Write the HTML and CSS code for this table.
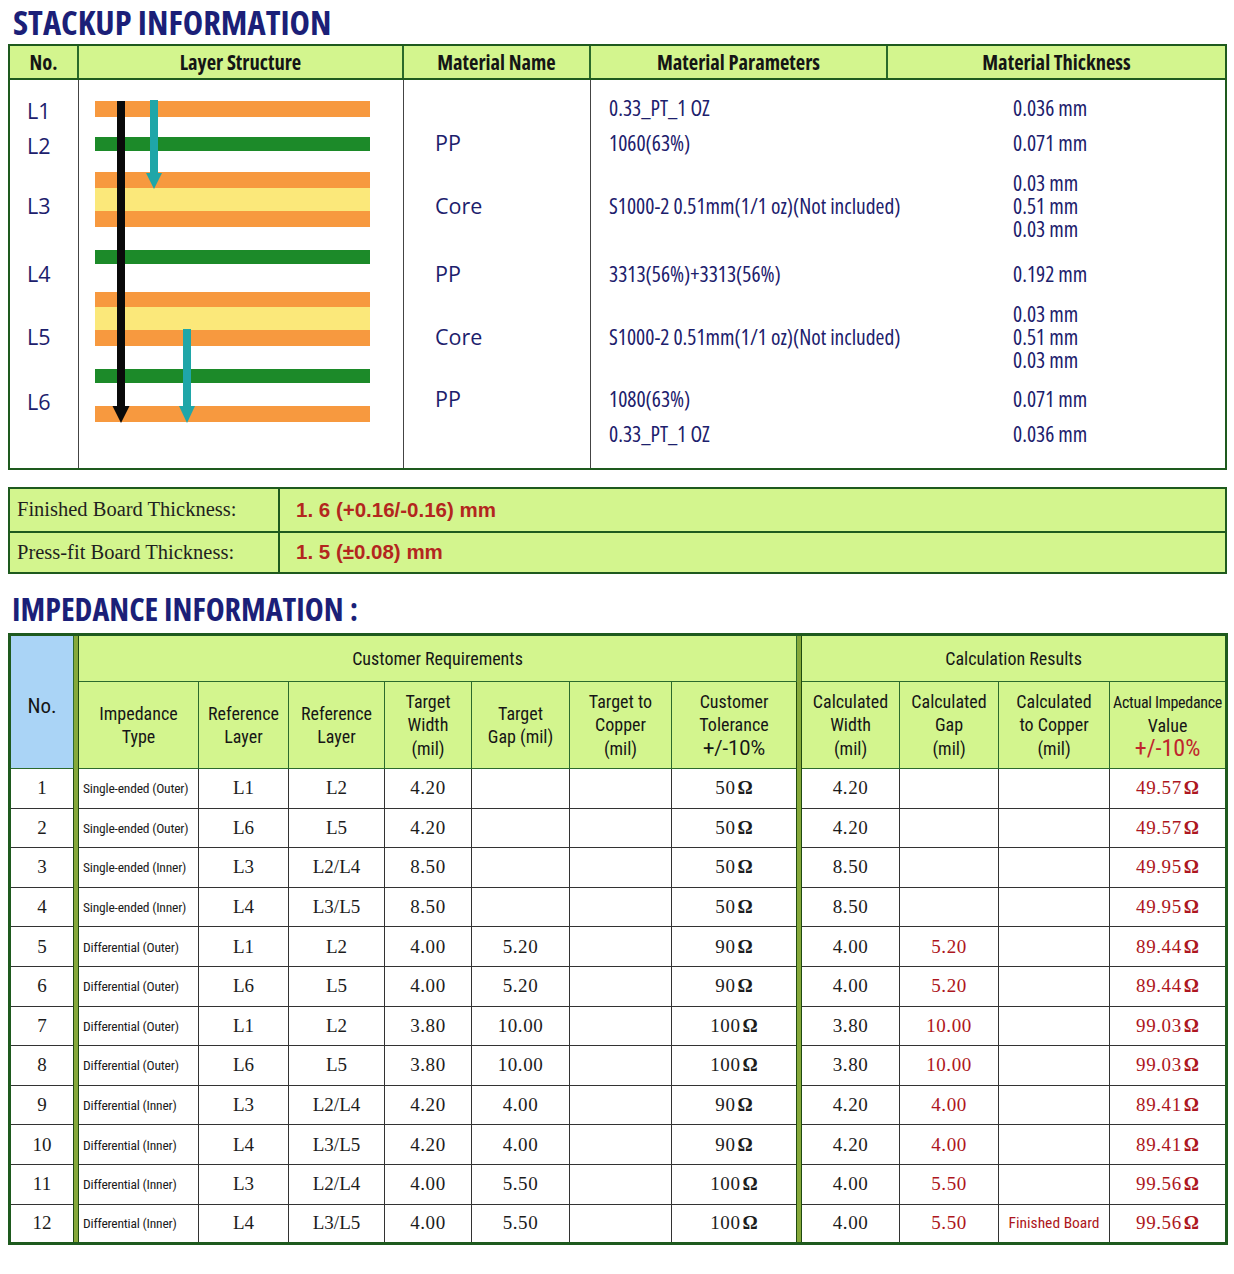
FILE: index.html
```html
<!DOCTYPE html>
<html>
<head>
<meta charset="utf-8">
<title>Stackup &amp; Impedance Information</title>
<link rel="stylesheet" href="styles.css">
</head>
<body>
<h1 class="title t1">STACKUP INFORMATION</h1>
<div class="stk">
  <div class="stk-head">
    <div class="sh">No.</div>
    <div class="sh">Layer Structure</div>
    <div class="sh">Material Name</div>
    <div class="sh">Material Parameters</div>
    <div class="sh last">Material Thickness</div>
  </div>
  <div class="stk-body">
    <div class="scol c1">
      <span class="r1 nudge">L1</span>
      <span class="r2 nudge">L2</span>
      <span class="r4">L3</span>
      <span class="r6">L4</span>
      <span class="r8">L5</span>
      <span class="r10 nudge">L6</span>
    </div>
    <div class="scol c2">
      <svg class="layers" width="323" height="388" viewBox="0 0 323 388">
        <rect x="16" y="21" width="275" height="16" fill="#f7993f"/>
        <rect x="16" y="57" width="275" height="14" fill="#1c8a29"/>
        <rect x="16" y="92" width="275" height="16" fill="#f7993f"/>
        <rect x="16" y="108" width="275" height="23" fill="#fbe87a"/>
        <rect x="16" y="131" width="275" height="16" fill="#f7993f"/>
        <rect x="16" y="170" width="275" height="14" fill="#1c8a29"/>
        <rect x="16" y="212" width="275" height="15" fill="#f7993f"/>
        <rect x="16" y="227" width="275" height="23" fill="#fbe87a"/>
        <rect x="16" y="250" width="275" height="16" fill="#f7993f"/>
        <rect x="16" y="289" width="275" height="14" fill="#1c8a29"/>
        <rect x="16" y="326" width="275" height="16" fill="#f7993f"/>
        <rect x="38" y="21" width="8" height="307" fill="#0a0a0a"/>
        <polygon points="33.5,326 50.5,326 42,343" fill="#0a0a0a"/>
        <rect x="71" y="20" width="8" height="75" fill="#1fa6a8"/>
        <polygon points="67,93 83,93 75,109" fill="#1fa6a8"/>
        <rect x="104" y="249" width="8" height="79" fill="#1fa6a8"/>
        <polygon points="100,326 116,326 108,343" fill="#1fa6a8"/>
      </svg>
    </div>
    <div class="scol c3">
      <span class="r2">PP</span>
      <span class="r4">Core</span>
      <span class="r6">PP</span>
      <span class="r8">Core</span>
      <span class="r10">PP</span>
    </div>
    <div class="scol c4">
      <span class="r1">0.33_PT_1 OZ</span>
      <span class="r2">1060(63%)</span>
      <span class="r4">S1000-2 0.51mm(1/1 oz)(Not included)</span>
      <span class="r6">3313(56%)+3313(56%)</span>
      <span class="r8">S1000-2 0.51mm(1/1 oz)(Not included)</span>
      <span class="r10">1080(63%)</span>
      <span class="r11">0.33_PT_1 OZ</span>
    </div>
    <div class="scol c5">
      <span class="r1">0.036 mm</span>
      <span class="r2">0.071 mm</span>
      <span class="r3">0.03 mm</span>
      <span class="r4">0.51 mm</span>
      <span class="r5">0.03 mm</span>
      <span class="r6">0.192 mm</span>
      <span class="r7">0.03 mm</span>
      <span class="r8">0.51 mm</span>
      <span class="r9">0.03 mm</span>
      <span class="r10">0.071 mm</span>
      <span class="r11">0.036 mm</span>
    </div>
  </div>
</div>

<div class="brd">
  <div class="bl">Finished Board Thickness:</div>
  <div class="bv">1. 6 (+0.16/-0.16) mm</div>
  <div class="bl bot">Press-fit Board Thickness:</div>
  <div class="bv bot">1. 5 (±0.08) mm</div>
</div>

<h2 class="title t2">IMPEDANCE INFORMATION<span class="colon">:</span></h2>

<table class="imp">
  <colgroup>
    <col style="width:64px"><col style="width:5px"><col style="width:120px"><col style="width:90px">
    <col style="width:96px"><col style="width:87px"><col style="width:98px"><col style="width:102px">
    <col style="width:125px"><col style="width:5px"><col style="width:98px"><col style="width:99px">
    <col style="width:111px"><col style="width:117px">
  </colgroup>
  <tr class="grp">
    <td class="hd no" rowspan="2">No.</td>
    <td class="dbl" rowspan="14"></td>
    <td class="hd" colspan="7">Customer Requirements</td>
    <td class="dbl" rowspan="14"></td>
    <td class="hd" colspan="4">Calculation Results</td>
  </tr>
  <tr class="sub">
    <td class="hd">Impedance<br>Type</td>
    <td class="hd">Reference<br>Layer</td>
    <td class="hd">Reference<br>Layer</td>
    <td class="hd">Target<br>Width<br>(mil)</td>
    <td class="hd">Target<br>Gap (mil)</td>
    <td class="hd">Target to<br>Copper<br>(mil)</td>
    <td class="hd">Customer<br>Tolerance<br><span class="tol">+/-10%</span></td>
    <td class="hd">Calculated<br>Width<br>(mil)</td>
    <td class="hd">Calculated<br>Gap<br>(mil)</td>
    <td class="hd">Calculated<br>to Copper<br>(mil)</td>
    <td class="hd act"><span class="small">Actual Impedance</span><br>Value<br><span class="pct">+/-10%</span></td>
  </tr>
  <tr><td>1</td><td class="ty">Single-ended (Outer)</td><td>L1</td><td>L2</td><td class="n">4.20</td><td></td><td></td><td class="n">50<b>Ω</b></td><td class="n">4.20</td><td></td><td></td><td class="n red">49.57<b>Ω</b></td></tr>
  <tr><td>2</td><td class="ty">Single-ended (Outer)</td><td>L6</td><td>L5</td><td class="n">4.20</td><td></td><td></td><td class="n">50<b>Ω</b></td><td class="n">4.20</td><td></td><td></td><td class="n red">49.57<b>Ω</b></td></tr>
  <tr><td>3</td><td class="ty">Single-ended (Inner)</td><td>L3</td><td>L2/L4</td><td class="n">8.50</td><td></td><td></td><td class="n">50<b>Ω</b></td><td class="n">8.50</td><td></td><td></td><td class="n red">49.95<b>Ω</b></td></tr>
  <tr><td>4</td><td class="ty">Single-ended (Inner)</td><td>L4</td><td>L3/L5</td><td class="n">8.50</td><td></td><td></td><td class="n">50<b>Ω</b></td><td class="n">8.50</td><td></td><td></td><td class="n red">49.95<b>Ω</b></td></tr>
  <tr><td>5</td><td class="ty">Differential (Outer)</td><td>L1</td><td>L2</td><td class="n">4.00</td><td class="n">5.20</td><td></td><td class="n">90<b>Ω</b></td><td class="n">4.00</td><td class="n red">5.20</td><td></td><td class="n red">89.44<b>Ω</b></td></tr>
  <tr><td>6</td><td class="ty">Differential (Outer)</td><td>L6</td><td>L5</td><td class="n">4.00</td><td class="n">5.20</td><td></td><td class="n">90<b>Ω</b></td><td class="n">4.00</td><td class="n red">5.20</td><td></td><td class="n red">89.44<b>Ω</b></td></tr>
  <tr><td>7</td><td class="ty">Differential (Outer)</td><td>L1</td><td>L2</td><td class="n">3.80</td><td class="n">10.00</td><td></td><td class="n">100<b>Ω</b></td><td class="n">3.80</td><td class="n red">10.00</td><td></td><td class="n red">99.03<b>Ω</b></td></tr>
  <tr><td>8</td><td class="ty">Differential (Outer)</td><td>L6</td><td>L5</td><td class="n">3.80</td><td class="n">10.00</td><td></td><td class="n">100<b>Ω</b></td><td class="n">3.80</td><td class="n red">10.00</td><td></td><td class="n red">99.03<b>Ω</b></td></tr>
  <tr><td>9</td><td class="ty">Differential (Inner)</td><td>L3</td><td>L2/L4</td><td class="n">4.20</td><td class="n">4.00</td><td></td><td class="n">90<b>Ω</b></td><td class="n">4.20</td><td class="n red">4.00</td><td></td><td class="n red">89.41<b>Ω</b></td></tr>
  <tr><td>10</td><td class="ty">Differential (Inner)</td><td>L4</td><td>L3/L5</td><td class="n">4.20</td><td class="n">4.00</td><td></td><td class="n">90<b>Ω</b></td><td class="n">4.20</td><td class="n red">4.00</td><td></td><td class="n red">89.41<b>Ω</b></td></tr>
  <tr><td>11</td><td class="ty">Differential (Inner)</td><td>L3</td><td>L2/L4</td><td class="n">4.00</td><td class="n">5.50</td><td></td><td class="n">100<b>Ω</b></td><td class="n">4.00</td><td class="n red">5.50</td><td></td><td class="n red">99.56<b>Ω</b></td></tr>
  <tr><td>12</td><td class="ty">Differential (Inner)</td><td>L4</td><td>L3/L5</td><td class="n">4.00</td><td class="n">5.50</td><td></td><td class="n">100<b>Ω</b></td><td class="n">4.00</td><td class="n red">5.50</td><td class="fb">Finished Board</td><td class="n red">99.56<b>Ω</b></td></tr>
</table>
</body>
</html>
```
FILE: styles.css
```css
* { box-sizing: border-box; }
body {
  margin: 0;
  width: 1234px;
  background: #ffffff;
  font-family: "Open Sans", "DejaVu Sans Condensed", sans-serif;
  font-stretch: 75%;
  color: #1a1a1a;
}
.title {
  margin: 0;
  height: 44px;
  line-height: 44px;
  padding-left: 13px;
  font-size: 32px;
  font-weight: bold;
  font-stretch: 75%;
  color: #1b1f78;
  white-space: nowrap;
}
.t1 { font-size: 34.5px; }
.t2 {
  margin-top: 10px;
  height: 49px;
  line-height: 49px;
  padding-left: 12px;
}
.colon { margin-left: 6px; }

/* ---------- stackup ---------- */
.stk {
  margin-left: 8px;
  width: 1219px;
  border: 2px solid #1e5a1e;
}
.stk-head {
  display: grid;
  grid-template-columns: 69px 325px 187px 297px 337px;
  height: 34px;
  background: #d3f58e;
  border-bottom: 2px solid #1e5a1e;
}
.sh {
  display: flex;
  align-items: center;
  justify-content: center;
  font-weight: bold;
  font-size: 20.5px;
  color: #151515;
  border-right: 2px solid #2a6a2a;
}
.sh.last { border-right: 0; }
.stk-body {
  display: flex;
  height: 388px;
}
.scol {
  display: grid;
  grid-template-rows: 15.5px 23px 12px 23px 17px 23px 23px 23px 22px 23px 17px 23px 23px 23px 16px 23px 12px 23px 1fr;
  color: #1c206c;
  font-size: 21.5px;
  flex: none;
}
.scol > span {
  display: flex;
  align-items: center;
  white-space: nowrap;
  line-height: 23px;
}
.c1 { width: 69px; padding-left: 17px; border-right: 1.5px solid #444; font-stretch: 90%; }
.c2 { width: 325px; border-right: 1.5px solid #444; display: block; }
.c3 { width: 187px; padding-left: 31px; border-right: 1.5px solid #444; font-stretch: 90%; }
.c4 { width: 297px; padding-left: 18px; }
.c5 { width: 337px; padding-left: 125px; }
.nudge { padding-top: 7px; }
.r1 { grid-row: 2; }
.r2 { grid-row: 4; }
.r3 { grid-row: 6; }
.r4 { grid-row: 7; }
.r5 { grid-row: 8; }
.r6 { grid-row: 10; }
.r7 { grid-row: 12; }
.r8 { grid-row: 13; }
.r9 { grid-row: 14; }
.r10 { grid-row: 16; }
.r11 { grid-row: 18; }
.layers { display: block; }

/* ---------- board thickness ---------- */
.brd {
  margin: 17px 0 0 8px;
  width: 1219px;
  display: grid;
  grid-template-columns: 270px 1fr;
  grid-template-rows: 41.5px 41.5px;
  background: #d3f58e;
  border: 2.5px solid #1e5a1e;
}
.bl {
  display: flex;
  align-items: center;
  padding-left: 7px;
  font-family: "Liberation Serif", "DejaVu Serif", serif;
  font-stretch: normal;
  font-size: 20.5px;
  color: #1f1f1f;
  border-right: 2px solid #1e5a1e;
}
.bv {
  display: flex;
  align-items: center;
  padding-left: 16px;
  font-family: "Liberation Sans", "DejaVu Sans", sans-serif;
  font-stretch: normal;
  font-weight: bold;
  font-size: 20.5px;
  color: #b3261e;
  white-space: pre;
}
.bot { border-top: 2px solid #1e5a1e; }

/* ---------- impedance ---------- */
.imp {
  margin-left: 8px;
  width: 1217px;
  table-layout: fixed;
  border-collapse: collapse;
  border: 3px solid #1e5a1e;
}
.imp td {
  padding: 0;
  text-align: center;
  vertical-align: middle;
  border: 1.5px solid #333;
  font-family: "Liberation Serif", "DejaVu Serif", serif;
  font-stretch: normal;
  font-size: 19px;
  color: #1c1c1c;
  white-space: nowrap;
  overflow: hidden;
}
.imp tr { height: 39.6px; }
.imp tr.grp { height: 47px; }
.imp tr.sub { height: 87px; }
.imp td.hd {
  background: #d3f58e;
  border: 1.5px solid #2c6a2c;
  font-family: "Roboto", "DejaVu Sans Condensed", sans-serif;
  font-stretch: 75%;
  font-size: 18px;
  line-height: 23.5px;
  color: #161616;
}
.imp td.no {
  background: #aad4f6;
  font-size: 21px;
  padding-top: 10px;
}
.imp td.dbl {
  background: #86a83a;
  border-top: 0;
  border-bottom: 0;
  border-left: 1.5px solid #1e4a10;
  border-right: 1.5px solid #1e4a10;
}
.imp td.act { line-height: 23px; }
.small { font-size: 16px; letter-spacing: -0.3px; }
.tol { font-size: 20px; font-stretch: 90%; }
.pct { color: #c0262c; font-size: 24px; font-stretch: 85%; }
.imp td.ty {
  text-align: left;
  padding-left: 4px;
  font-family: "Roboto", "DejaVu Sans Condensed", sans-serif;
  font-stretch: 75%;
  font-size: 13.5px;
  letter-spacing: -0.2px;
}
.imp td.n { letter-spacing: 0.6px; }
.imp td b { font-weight: bold; margin-left: 2px; letter-spacing: 0; }
.imp td.red { color: #ad1620; }
.imp td.fb {
  color: #ad1620;
  font-family: "Roboto", "DejaVu Sans Condensed", sans-serif;
  font-stretch: 75%;
  font-size: 15.5px;
}
```
